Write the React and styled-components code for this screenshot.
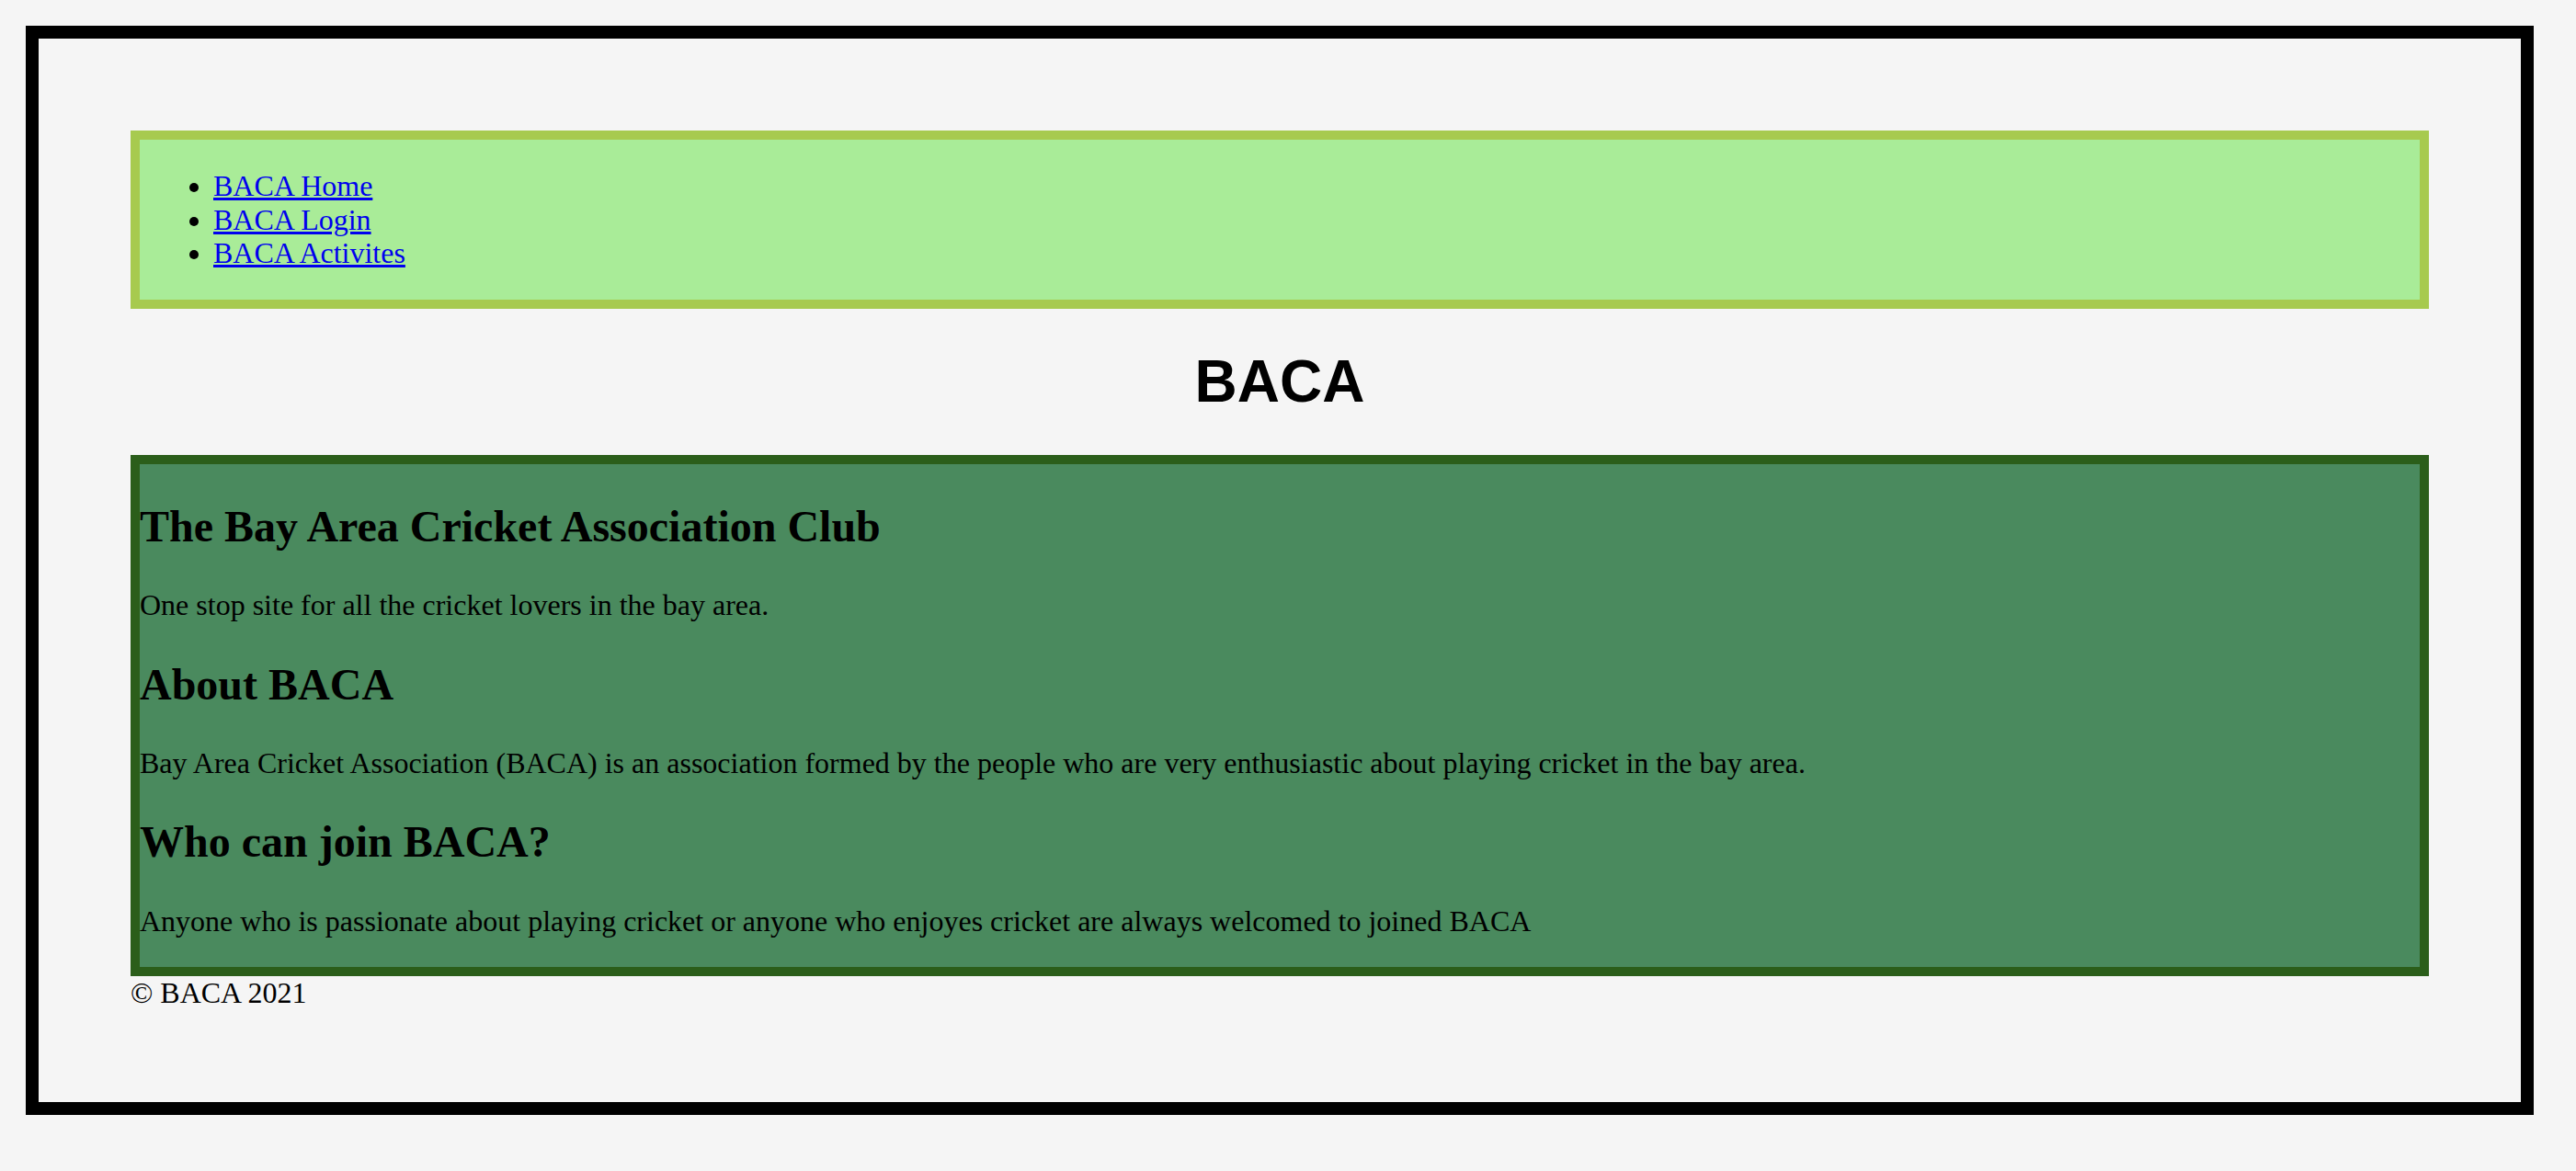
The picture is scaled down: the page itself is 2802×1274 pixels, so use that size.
import React from "react"
import styled, { createGlobalStyle } from 'styled-components'

const GlobalStyle = createGlobalStyle`
    html, body {
        margin: 0;
        padding: 0;
        background: #f5f5f5;
    }
    body {
        font-family: "Liberation Serif", "Times New Roman", serif;
        font-size: 32px;
        line-height: 36.5px;
        color: #000000;
    }
`

const Frame = styled.div`
    box-sizing: border-box;
    width: 2728px;
    margin: 28px 0 0 28px;
    border: 14px solid #000000;
    padding: 100px;
    background: #f5f5f5;
`

const NavBar = styled.nav`
    background: #a9ec98;
    border: 10px solid #a7ca4f;
`

const NavList = styled.ul`
    margin: 32px 0;
    padding-left: 80px;
    list-style: disc;
`

const NavLink = styled.a`
    color: #0000ee;
    text-decoration: underline;
`

const Title = styled.h1`
    margin: 0.67em 0;
    font-family: "Liberation Sans", Arial, sans-serif;
    font-size: 64px;
    line-height: normal;
    font-weight: 700;
    text-align: center;
`

const Content = styled.main`
    background: #4a8a5e;
    border: 10px solid #2b5e1a;
`

const Heading = styled.h2`
    margin: 0.83em 0;
    font-size: 48px;
    line-height: 55.5px;
    font-weight: 700;
`

const Text = styled.p`
    margin: 32px 0;
`

const Footer = styled.footer`
    font-size: 32px;
`

const links = ['BACA Home', 'BACA Login', 'BACA Activites']

function App() {
    return (
        <>
            <GlobalStyle />
            <Frame>
                <NavBar>
                    <NavList>
                        {links.map(label => (
                            <li key={label}>
                                <NavLink href="#">{label}</NavLink>
                            </li>
                        ))}
                    </NavList>
                </NavBar>
                <Title>BACA</Title>
                <Content>
                    <Heading>The Bay Area Cricket Association Club</Heading>
                    <Text>One stop site for all the cricket lovers in the bay area.</Text>
                    <Heading>About BACA</Heading>
                    <Text>Bay Area Cricket Association (BACA) is an association formed by the people who are very enthusiastic about playing cricket in the bay area.</Text>
                    <Heading>Who can join BACA?</Heading>
                    <Text>Anyone who is passionate about playing cricket or anyone who enjoyes cricket are always welcomed to joined BACA</Text>
                </Content>
                <Footer>© BACA 2021</Footer>
            </Frame>
        </>
    )
}

export default App;
